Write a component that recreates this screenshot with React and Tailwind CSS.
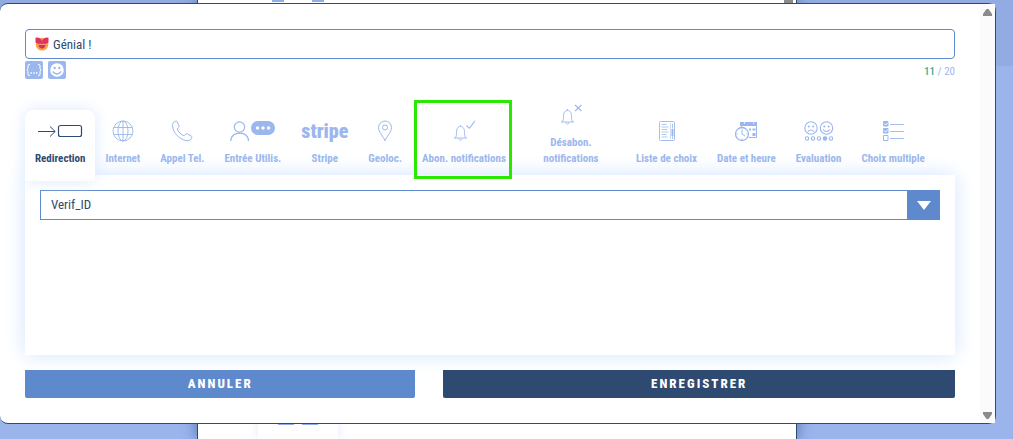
import { clsx } from "clsx"

const tabs = [
  { id: "redirection", label: "Redirection", Icon: RedirectionIcon },
  { id: "internet", label: "Internet", Icon: GlobeIcon },
  { id: "phone", label: "Appel Tel.", Icon: PhoneIcon },
  { id: "input", label: "Entrée Utilis.", Icon: UserInputIcon },
  { id: "stripe", label: "Stripe", Icon: StripeIcon },
  { id: "geoloc", label: "Geoloc.", Icon: PinIcon },
  { id: "subscribe", label: "Abon. notifications", Icon: BellCheckIcon, highlighted: true },
  { id: "unsubscribe", label: "Désabon. notifications", Icon: BellCrossIcon, wide: true },
  { id: "list", label: "Liste de choix", Icon: ListIcon },
  { id: "date", label: "Date et heure", Icon: DateIcon },
  { id: "evaluation", label: "Evaluation", Icon: EvaluationIcon },
  { id: "multiple", label: "Choix multiple", Icon: MultipleIcon },
]

function RedirectionIcon() {
  return (
    <svg width="46" height="22" viewBox="0 0 46 22" fill="none" stroke="currentColor" strokeWidth="1">
      <path d="M1 11.500H18M13 6.500l5.200 5L13 16.500" />
      <rect x="21.500" y="5.500" width="23" height="11" rx="2" strokeWidth="1.200" />
    </svg>
  )
}

function GlobeIcon() {
  return (
    <svg width="22" height="22" viewBox="0 0 22 22" fill="none" stroke="currentColor" strokeWidth=".9">
      <circle cx="11" cy="11" r="10" />
      <ellipse cx="11" cy="11" rx="5" ry="10" />
      <path d="M11 1v20M2 7.500h18M2 14.500h18" />
    </svg>
  )
}

function PhoneIcon() {
  return (
    <svg width="22" height="22" viewBox="0 0 22 22" fill="none" stroke="currentColor" strokeWidth="1" strokeLinejoin="round">
      <path d="M4.500 1.200 C2.500 2 1.200 3.500 1.500 6 C2.300 13.500 8.500 19.500 16 20.700 C18.500 21 20.200 19.500 20.800 17.500 C21 16.700 20.700 16.300 20 15.900 L16.300 13.900 C15.600 13.600 15 13.700 14.500 14.200 L13 15.800 C10 14.600 7.400 12 6.200 9 L7.600 7.500 C8.100 7 8.200 6.400 7.900 5.700 L6.100 1.900 C5.800 1.200 5.200 .9 4.500 1.200Z" />
    </svg>
  )
}

function UserInputIcon() {
  return (
    <svg width="46" height="22" viewBox="0 0 46 22" fill="none">
      <circle cx="9.500" cy="7" r="5.200" stroke="currentColor" strokeWidth="1.200" />
      <path d="M.8 21C.8 10.500 18.500 10.500 18.500 21" stroke="currentColor" strokeWidth="1.200" />
      <rect x="21" y="1" width="24" height="14" rx="7" fill="currentColor" />
      <g fill="#fff">
        <circle cx="27.500" cy="8" r="1.700" />
        <circle cx="33" cy="8" r="1.700" />
        <circle cx="38.500" cy="8" r="1.700" />
      </g>
    </svg>
  )
}

function StripeIcon() {
  return <span className="text-[20px] leading-[22px] font-black">stripe</span>
}

function PinIcon() {
  return (
    <svg width="16" height="22" viewBox="0 0 16 22" fill="none" stroke="currentColor" strokeWidth="1">
      <path d="M8 20.800C6.500 16.500 1.500 12 1.500 7.500a6.500 6.500 0 0 1 13 0c0 4.500-5 9-6.500 13.300Z" />
      <circle cx="8" cy="7.500" r="2.500" />
    </svg>
  )
}

function Bell() {
  return (
    <path d="M1 18h13M2 18c1.300-1.300 1.500-2.500 1.500-5.500 0-4 1.500-6 4-6s4 2 4 6c0 3 .2 4.200 1.500 5.500M6 18.500c.3 2.300 2.700 2.300 3 0M7.500 6.500V5" />
  )
}

function BellCheckIcon() {
  return (
    <svg width="22" height="22" viewBox="0 0 22 22" fill="none" stroke="currentColor" strokeWidth=".9">
      <Bell />
      <path d="M13.500 5.500l3 2.800L22 .8" strokeWidth="1.100" />
    </svg>
  )
}

function BellCrossIcon() {
  return (
    <svg width="22" height="22" viewBox="0 0 22 22" fill="none" stroke="currentColor" strokeWidth=".9">
      <Bell />
      <path d="M15 1l6.500 6M21.500 1L15 7" strokeWidth="1.100" />
    </svg>
  )
}

function ListIcon() {
  return (
    <svg width="18" height="22" viewBox="0 0 18 22" fill="none" stroke="currentColor" strokeWidth="1">
      <rect x="1.500" y="1.500" width="15" height="19" rx="1" strokeWidth=".9" />
      <path d="M3.500 4.500h5M3.500 7h7M3.500 9.500h6M3.500 12h7M3.500 14.500h5M3.500 17h6" strokeWidth=".8" />
      <path d="M12.500 3v16" strokeWidth=".5" />
      <path d="M14.500 3.500v5" strokeWidth=".8" />
      <path d="M14.500 9v7" strokeWidth="2" />
      <path d="M14.500 16v3" strokeWidth=".8" />
    </svg>
  )
}

function DateIcon() {
  return (
    <svg width="24" height="22" viewBox="0 0 24 22" fill="none" stroke="currentColor" strokeWidth="1">
      <path d="M7.500 7V3h15v14.500H15" />
      <path d="M6 2h17v4H6z" fill="currentColor" stroke="none" />
      <path d="M10.500 1v3M19.500 1v3" stroke="#fff" strokeWidth=".7" />
      <path d="M15 8.500h2v2h-2zM18.500 8.500h3v2h-3zM18.500 13h3v3h-3z" fill="currentColor" stroke="none" />
      <circle cx="8" cy="14" r="6.500" fill="#fff" strokeWidth="1.300" />
      <path d="M8 10v4l3 2M8 8.500v1M8 18.500v1M2.500 14h1M12.500 14h1" />
    </svg>
  )
}

function EvaluationIcon() {
  return (
    <svg width="30" height="22" viewBox="0 0 30 22" fill="none" stroke="currentColor" strokeWidth="1.100">
      <circle cx="7" cy="8" r="6.200" />
      <circle cx="22.500" cy="8" r="6.200" />
      <path d="M4 11.500q3-3 6 0M19 9.500q3.500 4 7 0" />
      <g fill="currentColor" stroke="none">
        <circle cx="4.800" cy="6.500" r="1" />
        <circle cx="9.200" cy="6.500" r="1" />
        <circle cx="20.300" cy="6.500" r="1" />
        <circle cx="24.700" cy="6.500" r="1" />
      </g>
      <circle cx="3" cy="18.500" r="1.700" />
      <circle cx="9" cy="18.500" r="1.700" />
      <circle cx="15" cy="18.500" r="1.700" />
      <circle cx="21" cy="18.500" r="1.800" fill="currentColor" />
      <circle cx="27" cy="18.500" r="1.700" />
    </svg>
  )
}

function MultipleIcon() {
  return (
    <svg width="22" height="22" viewBox="0 0 22 22" fill="none" stroke="currentColor" strokeWidth="1">
      <path d="M1.500 1.500h4.500v4.500H1.500zM1.500 8.500h4.500v4.500H1.500z" fill="currentColor" />
      <path d="M1.500 15.500h4.500v5H1.500z" />
      <path d="M8 4.500h14M8 11.500h14M8 18.500h14" strokeWidth=".9" />
      <path d="M2 3.500l1.500 1.500L6 2.500M2 10.500l1.500 1.500L6 9.500" stroke="#fff" />
    </svg>
  )
}

function LoveEmoji() {
  return (
    <svg width="14" height="14" viewBox="0 0 14 14" aria-hidden="true">
      <circle cx="7" cy="7.300" r="6.300" fill="#f9a03f" />
      <path d="M.5.800Q3.500-.3 7 3 10.500-.3 13.500.8V5.500L10.500 7h-7L.5 5.500Z" fill="#e0315f" />
      <path d="M6.200.8h1.600L7 5Z" fill="#f9a03f" />
      <path d="M3.500 7.500h7Q10.200 11.400 7 11.400T3.500 7.500Z" fill="#d9305a" />
      <path d="M3.500 7.300h7" stroke="#f2b6b0" strokeWidth=".8" />
    </svg>
  )
}

function Tab({ tab, active }) {
  const { label, Icon, highlighted, wide } = tab
  return (
    <button
      type="button"
      role="tab"
      aria-selected={active}
      className={clsx(
        "relative flex shrink-0 flex-col items-center gap-[5px] px-[10px] pt-2 pb-[14px] text-[11px] leading-4 font-bold",
        wide && "w-[110px]",
        active ? "z-10 rounded-t-lg bg-white text-[#2f4a70] shadow-[0_0_16px_#dbe8ff]" : "text-[#9bb7ee]"
      )}
    >
      <span className="flex h-7 items-center pb-[2px]">
        <Icon />
      </span>
      <span>{label}</span>
      {highlighted && <span className="absolute -top-[10px] right-1 bottom-[2px] left-[2px] border-3 border-[#2be800]" />}
    </button>
  )
}

function Backdrop() {
  return (
    <div className="absolute inset-0 bg-linear-to-b from-[#92abe2] from-15% to-[#9bb5ec] to-15% pr-[19px]">
      <div className="mx-auto flex h-full w-[600px] flex-col justify-between border-x border-[#2f4a70] bg-white shadow-[0_0_14px_#4d6da8]">
        <div className="flex h-[3px] items-start pl-[74px]">
          <span className="h-[2px] w-3 bg-[#8fadea]" />
          <span className="ml-7 h-[2px] w-3 bg-[#8fadea]" />
          <span className="mr-[3px] ml-auto h-[3px] w-[9px] bg-[#8b8b8b]" />
        </div>
        <div className="ml-[60px] flex h-4 w-20 justify-center gap-2 shadow-[0_0_12px_#dbe8ff]">
          <span className="h-[2px] w-4 bg-[#8fadea]" />
          <span className="h-[2px] w-4 bg-[#8fadea]" />
        </div>
      </div>
    </div>
  )
}

export default function App() {
  return (
    <div className="relative min-h-screen overflow-hidden bg-[#9bb5ec] pt-[3px] pr-[17px] pb-[15px] font-['Roboto_Condensed','Liberation_Sans_Narrow',Roboto,sans-serif] text-[#2f4a70]">
      <Backdrop />
      <div role="dialog" aria-label="Bouton" className="relative flex rounded-lg border-y border-r border-[#2f4a70] bg-white">
        <form className="min-w-0 flex-1 p-[25px]">
          <label className="flex h-[30px] items-center gap-1 rounded-sm border border-[#5e89cc] px-[9px]">
            <LoveEmoji />
            <input aria-label="Texte du bouton" defaultValue="Génial !" className="min-w-0 flex-1 pt-px text-[13px] outline-none" />
          </label>
          <div className="mt-[2px] flex items-center gap-[5px]">
            <button type="button" aria-label="Variable" className="h-[18px] w-[18px] rounded-xs bg-[#9bb7ee] text-white">
              <svg width="18" height="18" viewBox="0 0 18 18" fill="none" stroke="#fff">
                <path d="M5 3.500H4Q3 3.500 3 5v2.500L2 9l1 1.500V13q0 1.500 1 1.500h1M13 3.500h1q1 0 1 1.500v2.500L16 9l-1 1.500V13q0 1.500-1 1.500h-1" />
                <path d="M5.500 12h1.500M8.300 12h1.500M11 12h1.500" strokeWidth="1.300" />
              </svg>
            </button>
            <button type="button" aria-label="Emoji" className="h-[18px] w-[18px] rounded-xs bg-[#9bb7ee]">
              <svg width="18" height="18" viewBox="0 0 18 18">
                <circle cx="9" cy="9" r="6.800" fill="#fff" />
                <circle cx="6.700" cy="7" r="1.200" fill="#9bb7ee" />
                <circle cx="11.300" cy="7" r="1.200" fill="#9bb7ee" />
                <path d="M4.800 10.500q4.200 5 8.400 0" fill="none" stroke="#9bb7ee" strokeWidth="1.300" />
              </svg>
            </button>
            <p className="ml-auto pt-[3px] text-[11px] leading-[15px] text-[#9bb7ee]">
              <span className="font-medium text-[#36b08f]">11</span> / 20
            </p>
          </div>

          <div role="tablist" className="mt-[15px] -mb-[6px] flex items-end">
            {tabs.map((tab) => (
              <Tab key={tab.id} tab={tab} active={tab.id === "redirection"} />
            ))}
          </div>
          <div role="tabpanel" className="h-[180px] bg-white p-[15px] shadow-[0_0_20px_#d2e5ff]">
            <div className="relative">
              <select
                aria-label="Redirection"
                className="block h-[30px] w-full appearance-none border border-[#5e89cc] bg-white pr-10 pl-[10px] text-[13px] outline-none"
              >
                <option>Verif_ID</option>
              </select>
              <span className="pointer-events-none absolute inset-y-0 right-0 flex w-[33px] items-center justify-center bg-[#5e89cc]">
                <svg width="14" height="9" viewBox="0 0 14 9" fill="#fff">
                  <path d="M0 0h14L7 9z" />
                </svg>
              </span>
            </div>
          </div>

          <div className="mt-[15px] grid grid-cols-[390fr_511fr] gap-7 text-[13px] leading-[28px] font-extrabold tracking-[2px] text-white">
            <button type="button" className="h-7 rounded-b-xs bg-[#5e89cc]">
              ANNULER
            </button>
            <button type="submit" className="h-7 rounded-b-xs bg-[#2f4a70]">
              ENREGISTRER
            </button>
          </div>
        </form>
        <div className="flex w-[15px] flex-col items-center justify-between bg-[#fbfbfb] pt-[5px] pb-1">
          <svg width="9" height="7" viewBox="0 0 9 7" fill="#8b8b8b">
            <path d="M3.500 0h2L9 5v2H0V5z" />
          </svg>
          <svg width="9" height="7" viewBox="0 0 9 7" fill="#8b8b8b">
            <path d="M0 0h9v2L5.500 7h-2L0 2z" />
          </svg>
        </div>
      </div>
    </div>
  )
}
